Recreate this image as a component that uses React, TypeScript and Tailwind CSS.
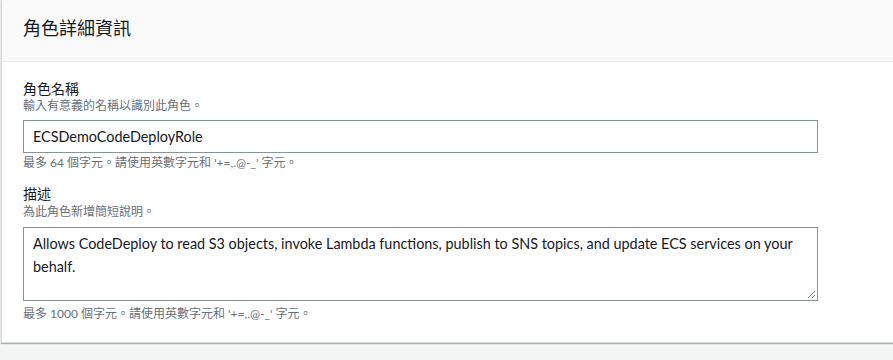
import React from "react";

const font = {
  fontFamily: 'Lato, "Noto Sans CJK TC", sans-serif',
};

export default function App() {
  return (
    <div className="w-[893px] h-[360px] bg-[#f2f3f3] overflow-hidden" style={font}>
      <div className="ml-px w-[900px] bg-white border-l border-b border-[#d5dbdb] shadow-[0_1px_1px_0_rgba(0,28,36,0.3)]">
        <div className="h-[62px] bg-[#fafafa] border-b border-[#eaeded] px-[21px] flex items-center">
          <h2 className="text-[18px] text-[#16191f] font-normal leading-none -mt-[6px]">角色詳細資訊</h2>
        </div>
        <div className="px-[21px] pt-[18px] pb-[19px]">
          <div className="text-[14px] leading-[18px] text-[#16191f]">角色名稱</div>
          <div className="text-[12px] leading-[16px] text-[#687078]">輸入有意義的名稱以識別此角色。</div>
          <div className="mt-[6px] w-[795px] h-[33px] border border-[#879596] flex items-center px-[9px] text-[14.4px] text-[#16191f]">
            ECSDemoCodeDeployRole
          </div>
          <div className="mt-[1px] text-[12px] leading-[18px] text-[#687078]">
            最多 64 個字元。請使用英數字元和 '+=,.@-_' 字元。
          </div>
          <div className="mt-[13px] text-[14px] leading-[18px] text-[#16191f]">描述</div>
          <div className="text-[12px] leading-[18px] text-[#687078]">為此角色新增簡短說明。</div>
          <div className="relative mt-[6px] w-[795px] h-[74px] border border-[#879596] px-[9px] pt-[4px] text-[14.4px] leading-[23px] text-[#16191f]">
            Allows CodeDeploy to read S3 objects, invoke Lambda functions, publish to SNS topics, and update ECS services on your behalf.
            <svg className="absolute right-[1px] bottom-[1px]" width="9" height="9" viewBox="0 0 9 9">
              <path d="M8 1 L1 8 M8 5 L5 8" stroke="#808080" strokeWidth="1" />
            </svg>
          </div>
          <div className="mt-[4px] text-[12px] leading-[18px] text-[#687078]">
            最多 1000 個字元。請使用英數字元和 '+=,.@-_' 字元。
          </div>
        </div>
      </div>
    </div>
  );
}
